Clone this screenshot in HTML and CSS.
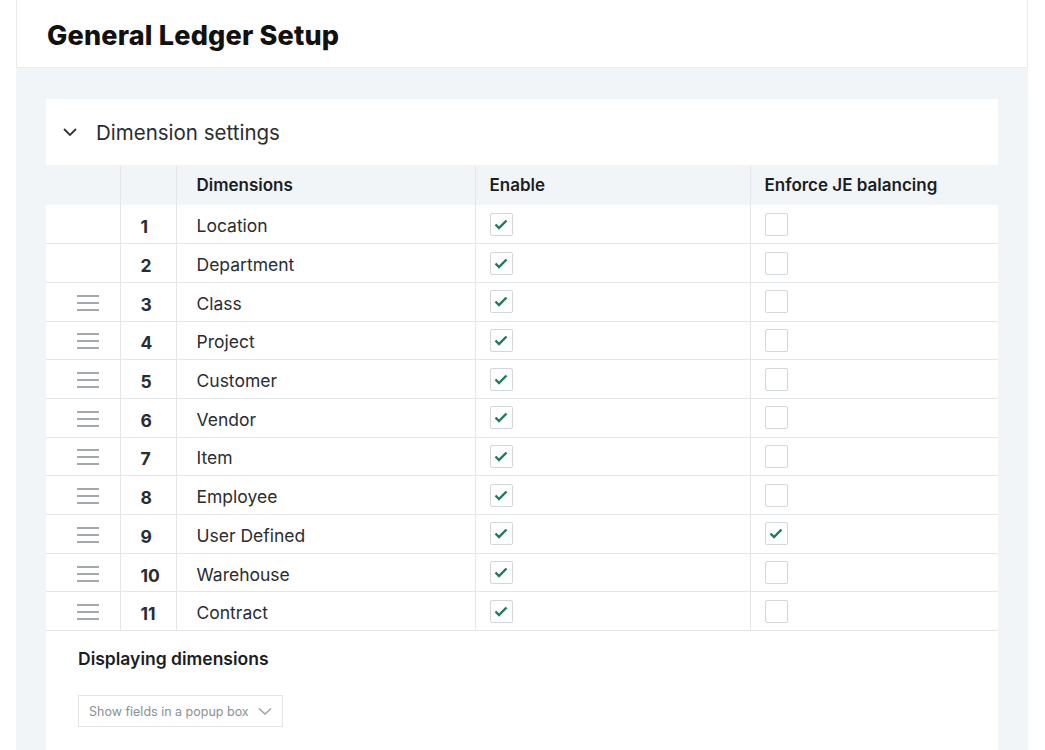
FILE: index.html
```html
<!doctype html>
<html>
    <head>
        <meta charset="UTF-8">
        <title>General Ledger Setup</title>
        <link rel="stylesheet" href="styles.css">
    </head>
    <body>
        <div class="page">
            <header class="page-header">
                <h1>General Ledger Setup</h1>
            </header>

            <main class="content">
                <section class="card">
                    <div class="card-title">
                        <svg class="chevron" width="16" height="10" viewBox="0 0 16 10">
                            <path d="M2 2 L8 8 L14 2" fill="none" stroke="#333" stroke-width="1.8"/>
                        </svg>
                        <span>Dimension settings</span>
                    </div>

                    <table class="dims">
                        <thead>
                            <tr>
                                <th class="col-drag"></th>
                                <th class="col-num"></th>
                                <th class="col-name">Dimensions</th>
                                <th class="col-enable">Enable</th>
                                <th class="col-enforce">Enforce JE balancing</th>
                            </tr>
                        </thead>
                        <tbody id="rows"></tbody>
                    </table>

                    <div class="display">
                        <h2>Displaying dimensions</h2>
                        <div class="select">
                            <span>Show fields in a popup box</span>
                            <svg width="14" height="9" viewBox="0 0 14 9">
                                <path d="M1 1.5 L7 7 L13 1.5" fill="none" stroke="#9aa0a6" stroke-width="1.4"/>
                            </svg>
                        </div>
                    </div>
                </section>
            </main>
        </div>

        <script>
            const dimensions = [
                { name: 'Location', fixed: true },
                { name: 'Department', fixed: true },
                { name: 'Class' },
                { name: 'Project' },
                { name: 'Customer' },
                { name: 'Vendor' },
                { name: 'Item' },
                { name: 'Employee' },
                { name: 'User Defined', enforce: true },
                { name: 'Warehouse' },
                { name: 'Contract' }
            ];

            const check = '<svg width="14" height="11" viewBox="0 0 14 11"><path d="M1.5 5.5 L5 9 L12.5 1.5" fill="none" stroke="#1f7a5a" stroke-width="2.4"/></svg>';
            const box = on => `<span class="box">${on ? check : ''}</span>`;
            const handle = '<span class="handle"><i></i><i></i><i></i></span>';

            document.getElementById('rows').innerHTML = dimensions.map((d, i) => `
                <tr>
                    <td class="col-drag">${d.fixed ? '' : handle}</td>
                    <td class="col-num">${i + 1}</td>
                    <td class="col-name">${d.name}</td>
                    <td class="col-enable">${box(true)}</td>
                    <td class="col-enforce">${box(d.enforce)}</td>
                </tr>`).join('');
        </script>
    </body>
</html>
```

FILE: styles.css
```css
:root {
    --text: #1b1d1f;
    --muted: #8b9095;
    --line: #e4e7ea;
    --gray-bg: #f2f5f7;
}

html, body {
    margin: 0;
    background: #fff;
}

* {
    font-family: Inter, "Noto Sans", sans-serif;
    color: var(--text);
    box-sizing: border-box;
}

.page {
    margin: 0 17px 0 16px;
    min-height: 750px;
    background: var(--gray-bg);
}

.page-header {
    background: #fff;
    height: 68px;
    border: 1px solid #e8ebed;
    border-top: none;
    padding: 4px 30px 0;
    display: flex;
    align-items: center;
}

h1 {
    margin: 0;
    font-size: 27px;
    font-weight: 800;
    letter-spacing: 0.2px;
    color: #111;
}

.content {
    padding: 31px 30px 0;
}

.card {
    background: #fff;
    min-height: 651px;
}

.card-title {
    height: 66px;
    display: flex;
    align-items: center;
    padding-left: 16px;
    gap: 18px;
    font-size: 20.5px;
}

.card-title span {
    color: #2a2d30;
}

.dims {
    width: 100%;
    border-collapse: collapse;
    table-layout: fixed;
}

.dims th {
    background: var(--gray-bg);
    height: 40px;
    text-align: left;
    font-size: 17px;
    font-weight: 600;
    padding: 0 0 0 15px;
}

.dims td {
    height: 38.7px;
    border-bottom: 1px solid var(--line);
    font-size: 17.5px;
    padding: 3px 0 0 15px;
    vertical-align: middle;
    color: #2a2d30;
}

.dims th + th,
.dims td + td {
    border-left: 1px solid var(--line);
}

.dims .col-drag { width: 74px; padding-left: 31px; padding-top: 0; }
.dims .col-num { width: 56px; padding-left: 20px; font-weight: 700; padding-top: 5px; }
.dims .col-name { width: 299px; padding-left: 20px; }
.dims .col-enable { width: 275px; padding-left: 14px; padding-top: 0; }
.dims .col-enforce { padding-left: 14px; padding-top: 0; }

.dims th.col-num { padding-top: 0; }

.handle {
    display: flex;
    flex-direction: column;
    gap: 5px;
    width: 22px;
    padding-top: 2px;
}

.handle i {
    display: block;
    height: 2px;
    background: #a3a8ad;
}

.box {
    display: flex;
    align-items: center;
    justify-content: center;
    width: 23px;
    height: 23px;
    border: 1px solid #d3d7db;
    border-radius: 2px;
    background: #fff;
}

.display {
    padding: 17px 32px 24px;
}

.display h2 {
    margin: 0 0 26px;
    font-size: 17.5px;
    font-weight: 600;
}

.select {
    display: inline-flex;
    align-items: center;
    gap: 9px;
    height: 32px;
    padding: 0 10px;
    border: 1px solid #e2e5e8;
    font-size: 12.5px;
}

.select span {
    color: var(--muted);
}
```
